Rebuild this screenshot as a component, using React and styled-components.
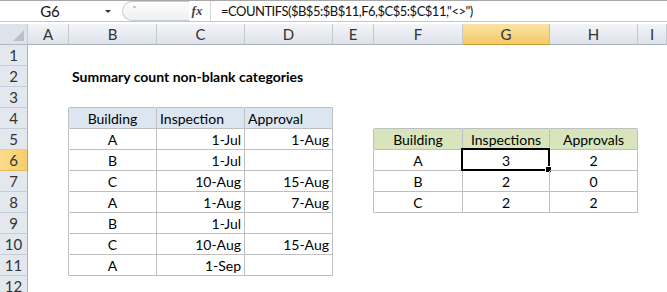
import React from 'react'
import styled, { createGlobalStyle } from 'styled-components'

const GlobalStyle = createGlobalStyle`
  html, body {
    margin: 0;
    padding: 0;
    background: #ffffff;
    overflow: hidden;
  }
  body {
    font-family: Lato, 'Liberation Sans', sans-serif;
    color: #000;
  }
`

const COLS = ['A', 'B', 'C', 'D', 'E', 'F', 'G', 'H', 'I']
const WIDTHS = [41, 88, 88, 88, 41, 89, 87, 88]
const ROW_COUNT = 12

const cells = {
  B2: { v: 'Summary count non-blank categories', bold: true, align: 'left' },
  B4: { v: 'Building', align: 'center', fill: '#dce6f1' },
  C4: { v: 'Inspection', align: 'left', fill: '#dce6f1' },
  D4: { v: 'Approval', align: 'left', fill: '#dce6f1' },
  B5: { v: 'A', align: 'center' }, C5: { v: '1-Jul', align: 'right' }, D5: { v: '1-Aug', align: 'right' },
  B6: { v: 'B', align: 'center' }, C6: { v: '1-Jul', align: 'right' },
  B7: { v: 'C', align: 'center' }, C7: { v: '10-Aug', align: 'right' }, D7: { v: '15-Aug', align: 'right' },
  B8: { v: 'A', align: 'center' }, C8: { v: '1-Aug', align: 'right' }, D8: { v: '7-Aug', align: 'right' },
  B9: { v: 'B', align: 'center' }, C9: { v: '1-Jul', align: 'right' },
  B10: { v: 'C', align: 'center' }, C10: { v: '10-Aug', align: 'right' }, D10: { v: '15-Aug', align: 'right' },
  B11: { v: 'A', align: 'center' }, C11: { v: '1-Sep', align: 'right' },
  F5: { v: 'Building', align: 'center', fill: '#d8e4bc' },
  G5: { v: 'Inspections', align: 'center', fill: '#d8e4bc' },
  H5: { v: 'Approvals', align: 'center', fill: '#d8e4bc' },
  F6: { v: 'A', align: 'center' }, G6: { v: '3', align: 'center' }, H6: { v: '2', align: 'center' },
  F7: { v: 'B', align: 'center' }, G7: { v: '2', align: 'center' }, H7: { v: '0', align: 'center' },
  F8: { v: 'C', align: 'center' }, G8: { v: '2', align: 'center' }, H8: { v: '2', align: 'center' },
}

const tables = [
  { c1: 1, c2: 3, r1: 4, r2: 11 },
  { c1: 5, c2: 7, r1: 5, r2: 8 },
]

const inTable = (c, r) =>
  tables.some(t => c >= t.c1 && c <= t.c2 && r >= t.r1 && r <= t.r2)

const ACTIVE = { col: 6, row: 6 }

const Sheet = styled.div`
  width: 667px;
  height: 292px;
  overflow: hidden;
`

const FormulaBar = styled.div`
  height: 20px;
  display: flex;
  align-items: center;
  border-top: 1px solid #a8a8a8;
  border-bottom: 1px solid #c6c6c6;
  background: #fff;
  font-size: 14px;
`

const NameBox = styled.div`
  width: 100px;
  text-align: center;
  font-size: 15px;
  color: #111;
`

const Drop = styled.div`
  width: 0;
  height: 0;
  margin-left: 5px;
  border-left: 3px solid transparent;
  border-right: 3px solid transparent;
  border-top: 3px solid #333;
`

const Splitter = styled.div`
  margin-left: 11px;
  width: 66px;
  height: 18px;
  border: 1px solid #c8ccd2;
  border-right: none;
  border-radius: 10px 0 0 10px;
  background: linear-gradient(#fdfdfd, #eef0f3);
  position: relative;
  &::after {
    content: '';
    position: absolute;
    left: 10px;
    top: 4px;
    width: 3px;
    height: 2px;
    background: #c6c9cf;
  }
`

const Fx = styled.div`
  width: 16px;
  font-family: 'Liberation Serif', serif;
  font-style: italic;
  font-weight: bold;
  font-size: 13px;
  color: #444;
  text-align: center;
`

const FxSep = styled.div`
  width: 1px;
  height: 20px;
  margin-left: 5px;
  background: #d4d4d4;
`

const Formula = styled.div`
  padding-left: 10px;
  white-space: nowrap;
  font-size: 13px;
  letter-spacing: -0.5px;
  color: #111;
`

const Gap = styled.div`
  height: 2px;
`

const Grid = styled.div`
  display: grid;
  grid-template-columns: 28px ${WIDTHS.map(w => `${w}px`).join(' ')} 1fr;
  grid-auto-rows: 21px;
  font-size: 14px;
`

const Corner = styled.div`
  background: #dfe4ec;
  border-right: 1px solid #c3c9d2;
  border-bottom: 1px solid #b0b7c2;
  position: relative;
  &::after {
    content: '';
    position: absolute;
    right: 3px;
    bottom: 3px;
    border-left: 11px solid transparent;
    border-bottom: 11px solid #b9c0ca;
  }
`

const ColHead = styled.div`
  display: flex;
  align-items: center;
  justify-content: center;
  font-size: 15px;
  color: #333;
  background: ${p => (p.$active
    ? 'linear-gradient(#fbe3a4, #f5c966)'
    : 'linear-gradient(#f3f5f8, #dde2ea)')};
  border-right: 1px solid ${p => (p.$active ? '#e6b95a' : '#c3c9d2')};
  border-bottom: 1px solid ${p => (p.$active ? '#c79b3a' : '#a9b1bd')};
`

const RowHead = styled.div`
  display: flex;
  align-items: center;
  justify-content: center;
  font-size: 15px;
  color: #333;
  background: ${p => (p.$active ? 'linear-gradient(90deg, #fbdc8e, #f6cd6c)' : '#e3e8ef')};
  border-right: 1px solid ${p => (p.$active ? '#c79b3a' : '#a9b1bd')};
  border-bottom: 1px solid ${p => (p.$active ? '#e6b95a' : '#c8ced7')};
`

const Cell = styled.div`
  position: relative;
  display: flex;
  align-items: flex-end;
  padding: 0 3px 1px;
  white-space: nowrap;
  justify-content: ${p => ({ left: 'flex-start', right: 'flex-end', center: 'center' }[p.$align] || 'flex-start')};
  font-weight: ${p => (p.$bold ? 700 : 400)};
  background: ${p => p.$fill || 'transparent'};
  border-right: 1px solid ${p => (p.$br ? '#bfbfbf' : 'transparent')};
  border-bottom: 1px solid ${p => (p.$bb ? '#bfbfbf' : 'transparent')};
  overflow: visible;
  z-index: ${p => (p.$bold ? 1 : 0)};
`

const Selection = styled.div`
  position: absolute;
  left: -2px;
  top: -2px;
  right: -1px;
  bottom: -1px;
  border: 2px solid #000;
  z-index: 2;
  pointer-events: none;
`

const Handle = styled.div`
  position: absolute;
  right: -4px;
  bottom: -4px;
  width: 5px;
  height: 5px;
  background: #000;
  border: 1px solid #fff;
`

export default function App() {
  const rows = Array.from({ length: ROW_COUNT }, (_, i) => i + 1)
  return (
    <Sheet>
      <GlobalStyle />
      <FormulaBar>
        <NameBox>G6</NameBox>
        <Drop />
        <Splitter />
        <Fx>fx</Fx>
        <FxSep />
        <Formula>=COUNTIFS($B$5:$B$11,F6,$C$5:$C$11,"&lt;&gt;")</Formula>
      </FormulaBar>
      <Gap />
      <Grid>
        <Corner />
        {COLS.map((c, i) => (
          <ColHead key={c} $active={i === ACTIVE.col}>{c}</ColHead>
        ))}
        {rows.map(r => (
          <React.Fragment key={r}>
            <RowHead $active={r === ACTIVE.row}>{r}</RowHead>
            {COLS.map((c, ci) => {
              const data = cells[`${c}${r}`] || {}
              const br = inTable(ci, r) || inTable(ci + 1, r)
              const bb = inTable(ci, r) || inTable(ci, r + 1)
              const active = ci === ACTIVE.col && r === ACTIVE.row
              return (
                <Cell
                  key={c}
                  $align={data.align}
                  $bold={data.bold}
                  $fill={data.fill}
                  $br={br}
                  $bb={bb}
                >
                  {data.v}
                  {active && (
                    <Selection>
                      <Handle />
                    </Selection>
                  )}
                </Cell>
              )
            })}
          </React.Fragment>
        ))}
      </Grid>
    </Sheet>
  )
}
